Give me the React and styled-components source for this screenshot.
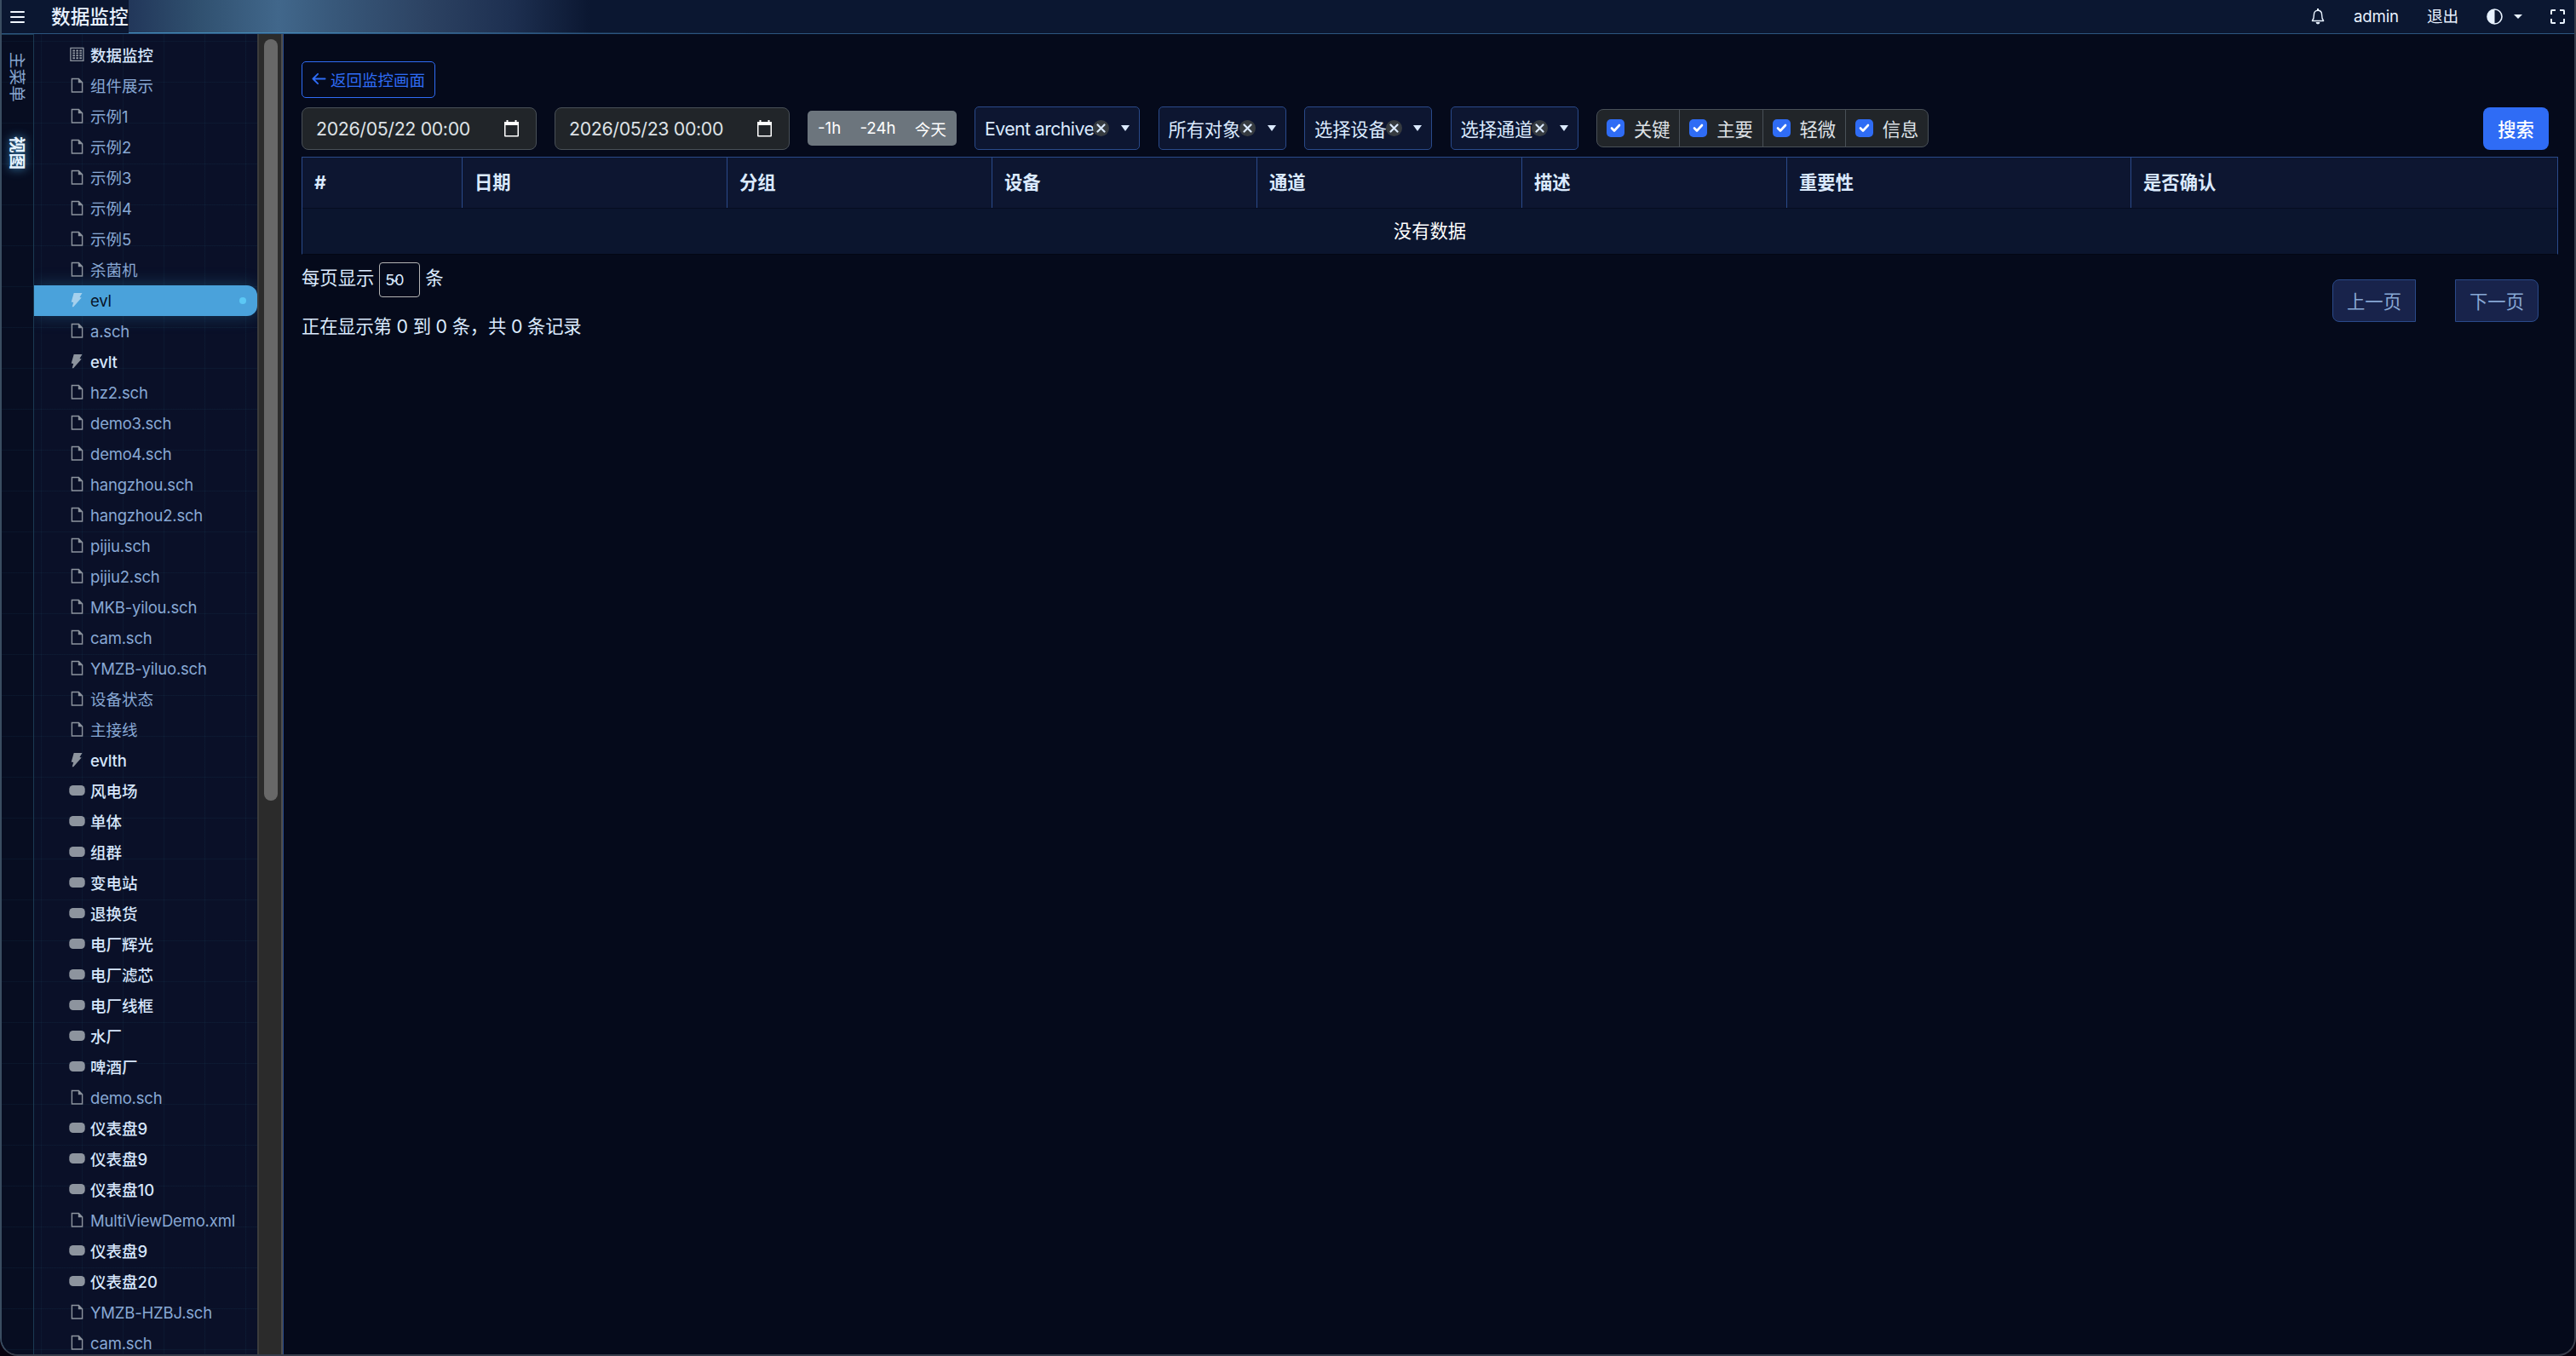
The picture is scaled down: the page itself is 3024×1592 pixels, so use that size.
import React from 'react'
import styled, { createGlobalStyle, css } from 'styled-components'

const GlobalStyle = createGlobalStyle`
    * {
        box-sizing: border-box;
    }

    body {
        margin: 0;
        background: #08020f;
        overflow: hidden;
        font-family: Inter, "Noto Sans CJK SC", sans-serif;
        color: #dbeafe;
    }
`

const Window = styled.div`
    display: flex;
    flex-direction: column;
    width: 3024px;
    height: 1592px;
    border: 2px solid #383d4b;
    border-top: 0;
    border-left-color: #3a4d61;
    border-radius: 0 0 21px 21px;
    background: #050a1b;
    overflow: hidden;
`

const Header = styled.header`
    display: flex;
    align-items: center;
    flex: none;
    height: 40px;
    border-bottom: 1px solid #2c5580;
    background:
        linear-gradient(90deg, #4a9fd0 0, rgba(74, 159, 208, 0) 900px) bottom / 100% 1px no-repeat,
        linear-gradient(90deg, #22375a 149px, #30506f 230px, #41678b 325px, #38587a 390px, #2c4262 500px, #1d2f50 600px, #0b1731 690px);
    color: #e8f2ff;
    font-size: 18.67px;
`

const Brand = styled.div`
    display: flex;
    align-items: center;
    width: 149px;
    height: 39px;
    padding-left: 10px;
    background: #0b1731;
    white-space: nowrap;

    svg {
        margin-right: 31px;
    }

    h1 {
        margin: 0;
        font-size: 22.67px;
        font-weight: 500;
        line-height: 41px;
    }
`

const HeaderTools = styled.div`
    display: flex;
    align-items: center;
    margin-left: auto;
    padding-right: 11px;
    height: 39px;
    letter-spacing: -0.2px;

    svg {
        display: block;
    }
`

const ToolItem = styled.div`
    width: ${props => props.$width}px;
    line-height: 41px;
    white-space: nowrap;
`

const Body = styled.div`
    display: flex;
    flex: 1;
    min-height: 0;
`

const Side = styled.aside`
    display: flex;
    flex: none;
    width: 331px;
    border-right: 1px solid #2a4a8a;
    background:
        repeating-linear-gradient(90deg, transparent 0 46px, rgba(56, 160, 190, 0.06) 46px 47px, transparent 47px 48px),
        repeating-linear-gradient(180deg, transparent 0 8px, rgba(56, 160, 190, 0.06) 8px 9px, transparent 9px 48px),
        linear-gradient(90deg, #070d21 0 37px, #0a1028 37px);
`

const Rail = styled.nav`
    flex: none;
    width: 38px;
    padding-top: 20px;
    border-top: 1px solid #1c3a52;
    border-right: 1px solid #1b3a52;
`

const RailTab = styled.div`
    height: 99px;
    padding-left: 7px;
    writing-mode: vertical-rl;
    text-orientation: sideways;
    width: 28px;
    line-height: 20px;
    font-size: 19.6px;
    color: #86a6d0;

    ${props => props.$active && css`
        color: #e6f3ff;
        font-weight: 700;
        text-shadow: 0 0 12px rgba(78, 172, 230, 0.9);
    `}
`

const Tree = styled.ul`
    flex: 1;
    min-width: 0;
    margin: 0;
    padding: 7px 0 0;
    list-style: none;
    overflow: hidden;
`

const TreeItem = styled.li`
    display: flex;
    align-items: center;
    height: 36px;
    padding-left: 41px;
    font-size: 18.5px;
    line-height: 36px;
    white-space: nowrap;
    letter-spacing: ${props => (props.$latin ? '-0.2px' : 'normal')};
    color: ${props => (props.$link ? '#88a8d4' : '#d6e6fb')};
    font-weight: ${props => (props.$link ? 400 : 500)};

    svg {
        flex: none;
        margin-right: 5px;
        color: #8d949e;
    }

    ${props => props.$active && css`
        border-radius: 0 12px 12px 0;
        background: #4aa2db;
        box-shadow: 0 0 20px rgba(56, 170, 220, 0.3);
        color: #071226;
        font-weight: 400;

        svg {
            color: #a5d0ed;
        }

        &::after {
            content: '';
            width: 8px;
            height: 8px;
            margin: 0 13px 0 auto;
            border-radius: 50%;
            background: #5cc8f5;
        }
    `}
`

const ScrollTrack = styled.div`
    flex: none;
    width: 30px;
    padding: 6px 6px 0;
    border-left: 2px solid #3c3c3c;
    border-right: 2px solid #4c4c4c;
    background: #2b2b2b;
`

const ScrollThumb = styled.div`
    width: 16px;
    height: 894px;
    border-radius: 8px;
    background: #686868;
`

const Main = styled.main`
    display: flex;
    flex-direction: column;
    flex: 1;
    min-width: 0;
    padding: 32px 19px 0 21px;
    font-size: 21.33px;
`

const BackButton = styled.button`
    display: flex;
    align-items: center;
    align-self: flex-start;
    width: 157px;
    height: 43px;
    padding: 0 0 2px 11px;
    border: 1px solid #2f6cf5;
    border-radius: 5px;
    background: transparent;
    color: #2f6cf5;
    font: inherit;
    font-size: 18.5px;
    white-space: nowrap;

    svg {
        margin-right: 5px;
    }
`

const Filters = styled.div`
    display: flex;
    align-items: center;
    height: 51px;
    margin-top: 10px;
    padding-right: 11px;
`

const DateField = styled.div`
    display: flex;
    align-items: center;
    justify-content: space-between;
    width: 276px;
    height: 50px;
    margin-right: 21px;
    padding: 0 20px 0 16px;
    border: 1px solid #495057;
    border-radius: 8px;
    background: #212529;
    color: #dee2e6;
    letter-spacing: -0.35px;
    white-space: nowrap;
`

const QuickRange = styled.div`
    display: flex;
    align-items: center;
    height: 41px;
    width: 175px;
    margin-right: 21px;
    padding: 0 12px;
    justify-content: space-between;
    border-radius: 5px;
    background: #6c757d;
    color: #fff;
    font-size: 18.67px;
    white-space: nowrap;
`

const Dropdown = styled.div`
    display: flex;
    align-items: center;
    width: ${props => props.$width}px;
    height: 51px;
    margin-right: 21.5px;
    padding: 0 11px;
    border: 1px solid #2a4a8a;
    border-radius: 5px;
    background: #0d1631;
    letter-spacing: ${props => props.$spacing || 0}px;
    white-space: nowrap;

    > svg {
        margin-left: auto;
    }
`

const ClearBadge = styled.span`
    display: flex;
    align-items: center;
    justify-content: center;
    flex: none;
    width: 19px;
    height: 19px;
    margin-left: -1px;
    border-radius: 50%;
    background: #363b40;
`

const Levels = styled.div`
    display: flex;
    width: 390px;
    height: 45px;
    border: 1px solid #495057;
    border-radius: 8px;
    background: #212529;
    color: #dee2e6;
`

const Level = styled.label`
    display: flex;
    align-items: center;
    flex: 1;
    padding-left: 11px;
    white-space: nowrap;

    & + & {
        border-left: 1px solid #495057;
    }
`

const Check = styled.span`
    display: flex;
    align-items: center;
    justify-content: center;
    width: 21px;
    height: 25px;
    margin-right: 11px;
    border-radius: 5px;
    background: #2f6cf5;
    height: 21px;
`

const SearchButton = styled.button`
    width: 77px;
    height: 50px;
    margin-left: auto;
    padding: 0;
    border: 0;
    border-radius: 8px;
    background: #2f6cf5;
    color: #fff;
    font: inherit;
    font-weight: 500;
`

const Table = styled.div`
    flex: none;
    margin-top: 8px;
    border: 1px solid #2a4a8a;
    border-bottom: 1px solid #030714;
`

const HeadRow = styled.div`
    display: grid;
    grid-template-columns: 187px repeat(5, 311px) 404px 1fr;
    height: 60px;
    border-bottom: 1px solid #060d20;
    background: #0d1631;
`

const HeadCell = styled.div`
    padding-left: 14px;
    font-weight: 700;
    line-height: 59px;

    & + & {
        border-left: 1px solid #2a4a8a;
    }
`

const EmptyRow = styled.div`
    height: 53px;
    background: #0b152e;
    color: #fff;
    line-height: 53px;
    text-align: center;
`

const Footer = styled.div`
    display: flex;
    justify-content: space-between;
    padding: 9px 23px 0 0;
`

const PageSize = styled.div`
    display: flex;
    align-items: center;
    height: 41px;
    line-height: 37px;
    white-space: nowrap;

    > span {
        height: 41px;
    }
`

const SizeSelect = styled.div`
    display: flex;
    align-items: center;
    width: 48px;
    height: 41px;
    margin: 0 6px;
    padding-left: 6px;
    border: 1px solid #b4b4b4;
    border-radius: 4px;
    font-size: 17.8px;

    svg {
        margin-left: -15px;
    }
`

const Summary = styled.div`
    margin-top: 18px;
    line-height: 32px;
    letter-spacing: -0.18px;
    white-space: nowrap;
`

const Pager = styled.div`
    display: flex;
    gap: 46px;
    margin-top: 20px;
`

const PageButton = styled.button`
    width: 98px;
    height: 50px;
    padding: 0 0 2px;
    border: 1px solid #2a4a8a;
    border-radius: ${props => (props.$end ? '0 8px 8px 0' : '8px 0 0 8px')};
    background: #18234b;
    color: #88a8d4;
    font: inherit;
`

const tree = [
    ['grid', '数据监控'], ['file', '组件展示'], ['file', '示例1'], ['file', '示例2'],
    ['file', '示例3'], ['file', '示例4'], ['file', '示例5'], ['file', '杀菌机'],
    ['bolt', 'evl', true], ['file', 'a.sch'], ['bolt', 'evlt'], ['file', 'hz2.sch'],
    ['file', 'demo3.sch'], ['file', 'demo4.sch'], ['file', 'hangzhou.sch'], ['file', 'hangzhou2.sch'],
    ['file', 'pijiu.sch'], ['file', 'pijiu2.sch'], ['file', 'MKB-yilou.sch'], ['file', 'cam.sch'],
    ['file', 'YMZB-yiluo.sch'], ['file', '设备状态'], ['file', '主接线'], ['bolt', 'evlth'],
    ['pill', '风电场'], ['pill', '单体'], ['pill', '组群'], ['pill', '变电站'],
    ['pill', '退换货'], ['pill', '电厂辉光'], ['pill', '电厂滤芯'], ['pill', '电厂线框'],
    ['pill', '水厂'], ['pill', '啤酒厂'], ['file', 'demo.sch'], ['pill', '仪表盘9'],
    ['pill', '仪表盘9'], ['pill', '仪表盘10'], ['file', 'MultiViewDemo.xml'], ['pill', '仪表盘9'],
    ['pill', '仪表盘20'], ['file', 'YMZB-HZBJ.sch'], ['file', 'cam.sch'],
]

const columns = ['#', '日期', '分组', '设备', '通道', '描述', '重要性', '是否确认']

const levels = ['关键', '主要', '轻微', '信息']

function TreeIcon({ type }) {
    return (
        <svg width="20" height="20" viewBox="0 0 20 20" fill="none" stroke="currentColor">
            {type === 'file' && (
                <>
                    <path d="M3.400 1.500h8l4.200 4.200v11.300H3.400z" strokeWidth="1.400" />
                    <path d="M10.800 1.300v5h5z" fill="currentColor" stroke="none" />
                </>
            )}
            {type === 'grid' && (
                <>
                    <path d="M1.900 1.300h15v15h-15z" strokeWidth="1.300" />
                    <path d="M4.300 4.500h11M4.300 7.400h11M4.300 10.300h11M4.300 13.200h11" strokeWidth="1.900" strokeDasharray="2.700 1.300" />
                </>
            )}
            {type === 'bolt' && (
                <path d="M5.700 1h9.800l-3 5 2.200.6L5.200 17.200H3.700l1.500-5.200-2.500-.6z" fill="currentColor" stroke="none" />
            )}
            {type === 'pill' && (
                <rect x="0.300" y="3" width="18.400" height="12" rx="4.500" fill="currentColor" stroke="none" />
            )}
        </svg>
    )
}

function CalendarIcon() {
    return (
        <svg width="17" height="20" viewBox="0 0 17 20" fill="#fff">
            <path d="M2.5 0h2v2h8V0h2v2H17v16.5a1 1 0 0 1-1 1H1a1 1 0 0 1-1-1V2h2.5zM1.5 6v12h14V6z" fillRule="evenodd" />
        </svg>
    )
}

function Caret({ width = 10, height = 7 }) {
    return (
        <svg width={width} height={height} viewBox="0 0 10 7" preserveAspectRatio="none" fill="currentColor">
            <path d="M0 0h10L5 7z" />
        </svg>
    )
}

function Select({ label, width, spacing }) {
    return (
        <Dropdown $width={width} $spacing={spacing}>
            {label}
            <ClearBadge>
                <svg width="11" height="11" viewBox="0 0 11 11" stroke="#dbeafe" strokeWidth="2.2" strokeLinecap="round">
                    <path d="M1.500 1.500l8 8M9.500 1.500l-8 8" />
                </svg>
            </ClearBadge>
            <Caret />
        </Dropdown>
    )
}

function TopBar() {
    return (
        <Header>
            <Brand>
                <svg width="17" height="16" viewBox="0 0 17 16" stroke="#f1f7ff" strokeWidth="2" strokeLinecap="round">
                    <path d="M1 2h15M1 8h15M1 14h15" />
                </svg>
                <h1>数据监控</h1>
            </Brand>
            <HeaderTools>
                <ToolItem $width={50}>
                    <svg width="16" height="19" viewBox="0 0 16 19" fill="none" stroke="currentColor" strokeWidth="1.4">
                        <path d="M8 2.2c-3 0-4.6 2.3-4.6 5 0 3.600-.7 5.700-2 7.300h13.200c-1.300-1.600-2-3.700-2-7.300 0-2.700-1.600-5-4.600-5z" strokeLinejoin="round" />
                        <path d="M8 0v2" strokeWidth="2" />
                        <path d="M5.600 16h4.800a2.400 2.400 0 0 1-4.800 0z" fill="currentColor" stroke="none" />
                    </svg>
                </ToolItem>
                <ToolItem $width={86}>admin</ToolItem>
                <ToolItem $width={70}>退出</ToolItem>
                <ToolItem $width={32}>
                    <svg width="19" height="19" viewBox="0 0 19 19">
                        <circle cx="9.500" cy="9.500" r="8.500" fill="none" stroke="currentColor" strokeWidth="1.600" />
                        <path d="M9.500 1a8.500 8.500 0 0 0 0 17z" fill="currentColor" />
                    </svg>
                </ToolItem>
                <ToolItem $width={43}><Caret height={5} /></ToolItem>
                <svg width="17" height="17" viewBox="0 0 17 17" fill="none" stroke="currentColor" strokeWidth="2">
                    <path d="M1 6V1.800a.8.8 0 0 1 .8-.8H6M11 1h4.200a.8.8 0 0 1 .8.8V6M16 11v4.200a.8.8 0 0 1-.8.8H11M6 16H1.800a.8.8 0 0 1-.8-.8V11" />
                </svg>
            </HeaderTools>
        </Header>
    )
}

function Sidebar() {
    return (
        <Side>
            <Rail>
                <RailTab>主菜单</RailTab>
                <RailTab $active>视图</RailTab>
            </Rail>
            <Tree>
                {tree.map(([type, label, active], i) => (
                    <TreeItem key={i} $link={type === 'file'} $latin={/^[a-z]/i.test(label)} $active={active}>
                        <TreeIcon type={type} />
                        {label}
                    </TreeItem>
                ))}
            </Tree>
            <ScrollTrack>
                <ScrollThumb />
            </ScrollTrack>
        </Side>
    )
}

function App() {
    return (
        <Window>
            <GlobalStyle />
            <TopBar />
            <Body>
                <Sidebar />
                <Main>
                    <BackButton>
                        <svg width="17" height="17" viewBox="0 0 18 18" fill="none" stroke="currentColor" strokeWidth="2" strokeLinecap="round" strokeLinejoin="round">
                            <path d="M16.500 9h-15M7.500 3l-6 6 6 6" />
                        </svg>
                        返回监控画面
                    </BackButton>
                    <Filters>
                        <DateField>2026/05/22 00:00 <CalendarIcon /></DateField>
                        <DateField>2026/05/23 00:00 <CalendarIcon /></DateField>
                        <QuickRange>
                            <span>-1h</span>
                            <span>-24h</span>
                            <span>今天</span>
                        </QuickRange>
                        <Select label="Event archive" width={194} spacing={-0.6} />
                        <Select label="所有对象" width={150} spacing={-0.2} />
                        <Select label="选择设备" width={150} spacing={-0.2} />
                        <Select label="选择通道" width={150} spacing={-0.2} />
                        <Levels>
                            {levels.map(level => (
                                <Level key={level}>
                                    <Check>
                                        <svg width="13" height="11" viewBox="0 0 13 11" fill="none" stroke="#fff" strokeWidth="2.600" strokeLinecap="round" strokeLinejoin="round">
                                            <path d="M2 5.500l3 3L11 2" />
                                        </svg>
                                    </Check>
                                    {level}
                                </Level>
                            ))}
                        </Levels>
                        <SearchButton>搜索</SearchButton>
                    </Filters>
                    <Table>
                        <HeadRow>
                            {columns.map(name => (
                                <HeadCell key={name}>{name}</HeadCell>
                            ))}
                        </HeadRow>
                        <EmptyRow>没有数据</EmptyRow>
                    </Table>
                    <Footer>
                        <div>
                            <PageSize>
                                <span>每页显示</span>
                                <SizeSelect>
                                    50
                                    <svg width="9" height="6" viewBox="0 0 9 6" fill="none" stroke="#dbeafe" strokeWidth="1.5">
                                        <path d="M1 1l3.500 3.500L8 1" />
                                    </svg>
                                </SizeSelect>
                                <span>条</span>
                            </PageSize>
                            <Summary>正在显示第 0 到 0 条，共 0 条记录</Summary>
                        </div>
                        <Pager>
                            <PageButton>上一页</PageButton>
                            <PageButton $end>下一页</PageButton>
                        </Pager>
                    </Footer>
                </Main>
            </Body>
        </Window>
    )
}

export default App
